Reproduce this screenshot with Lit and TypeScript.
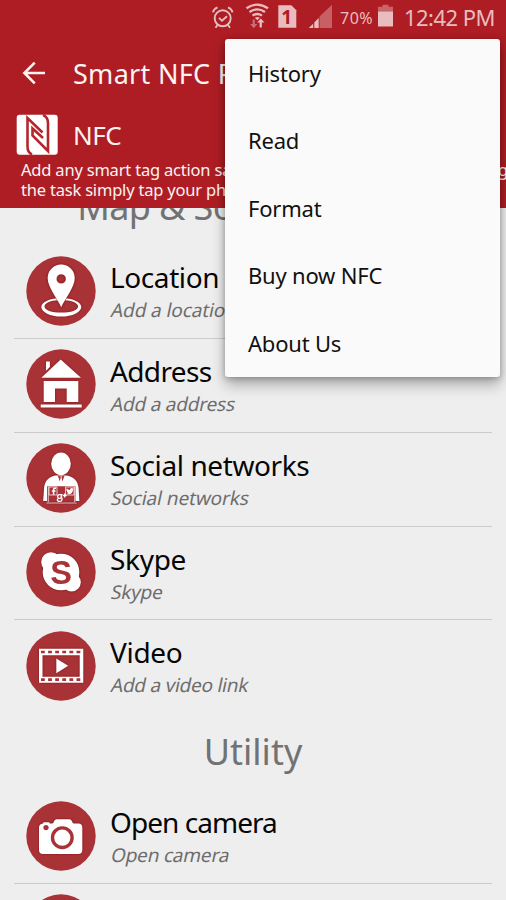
import { LitElement, html, svg, css, SVGTemplateResult } from "lit";
import { customElement, property } from "lit/decorators.js";

const red = "#a93236";

const icons: Record<string, SVGTemplateResult> = {
  location: svg`
    <path fill-rule="evenodd" d="M35.3 42c11 0 20 4 20 9s-9 9.6-20 9.6-20-4.600-20-9.600 9-9 20-9zM35.300 44c-9.500 0-16.800 2.800-16.800 6.400s7.300 6.200 16.800 6.200 16.800-2.600 16.800-6.200-7.300-6.400-16.800-6.400z"/>
    <path fill-rule="evenodd" stroke="${red}" stroke-width="1" paint-order="stroke" d="M35.200 51.300C32 43.500 21.700 31.500 21.700 22.100a13.500 13.500 0 0 1 27 0c0 9.400-10.300 21.400-13.500 29.200zM35.200 18.200a4.700 4.700 0 1 0 0 9.400a4.700 4.700 0 1 0 0-9.400z"/>`,
  address: svg`
    <path d="M20 12.500h3.900v5.500L20 21.700zM15.300 28.800L34.700 10.500L55 28.800z"/>
    <path d="M17.700 32h34.600v21H40.700V39.500H29V53H17.700zM14.700 55.400h41v3h-41z"/>`,
  social: svg`
    <ellipse cx="35" cy="20.800" rx="9.800" ry="11.400"/>
    <path d="M29.500 32.400h11c7 1 11.300 5.500 12 12l.9 13.600H17.200l.9-13.600c.6-6.500 4.900-11 11.400-12z"/>
    <path fill="${red}" d="M31.800 32.400l2 6.200 1.200-5.200zM38.500 32.400l-2 6.200-1.200-5.200zM21 43.200h28.500v15.500H21z"/>
    <path fill="none" stroke="#fff" stroke-width=".7" d="M23 44h8v8h-8zM39.500 44h8.500v8h-8.500zM22.300 43.500v15.500M48.700 43.500v15.500M20.500 60h30"/>
    <path fill="none" stroke="#fff" stroke-width="1.600" d="M30 45.300h-1.200q-1.200 0-1.200 1.300v5.200M25.800 48h3.800"/>
    <path d="M40.700 45.300c1 1.200 2 1.600 3.300 1.600 0-2 2-2.200 2.800-1.300l1-.3-.8 1.500c.1 3.500-3.300 5.500-6.500 4 1 0 1.500-.2 2-.7-1.200-.5-1.400-1-1.500-1.600-.7-.8-.7-2-.3-3.200z"/>
    <path fill="none" stroke="#fff" stroke-width="1.300" d="M36.500 51.600h-3a1.900 1.900 0 1 0 1.800 1.200l-.3 1.300c1.600 1 1.600 4.200-1.300 4.300-3.200 0-3.200-3.200.6-3.300M38.700 50.500v4M36.800 52.500h3.800"/>`,
  skype: svg`
    <circle cx="35" cy="35" r="18.300"/><circle cx="25" cy="25" r="9.800"/><circle cx="45.600" cy="45.300" r="9.200"/>
    <text x="35" y="46.700" text-anchor="middle" font-family="Liberation Sans, sans-serif" font-weight="700" font-size="32.500" fill="${red}">S</text>`,
  video: svg`
    <path fill-rule="evenodd" d="M13 17.800h44.300v34H13zM16.500 24.300v21.500h37.200v-21.500z"/>
    <path d="M30.300 27.500L42.200 34.800L30.300 42.300z"/>
    <path stroke="${red}" stroke-width="2.700" stroke-dasharray="3.800 3.300" d="M15 21h41M15 48.700h41"/>`,
  camera: svg`
    <path d="M17 22.500q0-1.300 1.300-1.300h4q1.200 0 1.500 1.300h2.200q1 0 1.500-1l.8-1.700q.7-1.500 2.300-1.500h12.800q1.600 0 2.300 1.500l.8 1.700q.5 1 1.600 1h4.200q4 0 4 4v22.500q0 4-4 4H17q-4 0-4-4V26.500q0-3.500 4-4z"/>
    <circle cx="36.300" cy="36.700" r="9.800" fill="none" stroke="${red}" stroke-width="3.400"/>
    <circle cx="20" cy="26.600" r="2.600" fill="${red}"/>`,
  blank: svg``,
};

@customElement("status-bar")
class StatusBar extends LitElement {
  static styles = css`
    :host { display: flex; height: 36px; padding-right: 10px; justify-content: flex-end; color: #e9bdbf; font-family: "Noto Sans", sans-serif; }
    svg { display: block; margin-top: 2px; flex: none; }
    .pct { font-size: 16px; line-height: 36px; letter-spacing: 0.5px; padding-left: 6px; width: 37px; }
    .time { font-size: 22px; line-height: 35px; width: 102px; letter-spacing: -0.55px; padding-left: 10px; box-sizing: border-box; white-space: nowrap; }
    .sim { font: 700 19px "Noto Sans", sans-serif; }
  `;
  render() {
    return html`
      <svg width="126" height="30" viewBox="208 2 126 30" fill="currentColor">
        <g fill="none" stroke="currentColor" stroke-width="1.900">
          <circle cx="222.700" cy="18.300" r="8"/>
          <path d="M219 17.800l3 3 5-4.600M217.500 25l-2 2.700M228 25l2 2.700M213 12.300q.5-3.300 4.500-5M232.500 12.300q-.5-3.300-4.500-5"/>
          <path stroke-width="2.300" d="M246.500 8.300q10.700-7.500 21.500 0M249.500 12q7.700-5.300 15.500 0M252.500 15.600q4.700-3.200 9.500 0"/>
        </g>
        <path d="M254.800 17.700q2.500-1.500 5 0l-2.500 2.500z"/>
        <path d="M260.800 18.500l3.700 4h-2.600v5h-2.300v-5h-2.500z"/>
        <path opacity=".5" d="M252.700 19.500h2.200v4.500h2.500l-3.600 4.300-3.700-4.300h2.600z"/>
        <path d="M278.300 5.300h13l5 5v17.500h-18z"/>
        <text class="sim" x="281.300" y="23.800" fill="#ae1d23">1</text>
        <path opacity=".42" d="M319.500 16.500L332 4.700V28H319.500z"/>
        <path d="M308.700 28l4.500-4.300V28zM314.300 22.600l4.400-4.600V28h-4.400z"/>
      </svg>
      <span class="pct">70%</span>
      <svg width="17" height="30" viewBox="377 2 17 30">
        <path fill="#c9656a" d="M382.500 4.700h6v2h4.500v5h-15v-5h4.500z"/>
        <path fill="currentColor" d="M378 11.500h15V26.500h-15z"/>
      </svg>
      <span class="time">12:42 PM</span>`;
  }
}

@customElement("action-row")
class ActionRow extends LitElement {
  @property() icon = "";
  @property() label = "";
  @property() detail = "";
  @property({ type: Boolean }) last = false;
  static styles = css`
    :host { display: block; height: 93.8px; margin: 0 14px; box-sizing: border-box; border-bottom: 1px solid #cbcbcb; font-family: "Noto Sans", sans-serif; }
    :host([last]) { border-color: transparent; }
    .row { display: flex; padding: 10.500px 0 0 11.500px; gap: 14.500px; }
    .row svg { flex: none; display: block; }
    .glyph { fill: #fff; filter: drop-shadow(0 0 1.2px rgba(80, 0, 0, 0.55)); }
    .label { font-size: 28px; line-height: 36px; color: #060606; letter-spacing: var(--track, -0.4px); margin-top: 3.500px; white-space: nowrap; }
    .detail { font-size: 19px; line-height: 26px; color: #6d6d6d; margin: 2px 0 0 -0.500px; white-space: nowrap; transform: skewX(-12deg); transform-origin: 0 20px; letter-spacing: var(--detail-track, -0.1px); }
  `;
  render() {
    return html`<div class="row">
      <svg width="70" height="70" viewBox="0 0 70 70">
        <circle cx="35" cy="35" r="34.700" fill="${red}"/>
        <g class="glyph">${icons[this.icon]}</g>
      </svg>
      <div><div class="label">${this.label}</div><div class="detail">${this.detail}</div></div>
    </div>`;
  }
}

@customElement("app-root")
class AppRoot extends LitElement {
  static styles = css`
    :host { display: flex; flex-direction: column; position: relative; height: 900px; overflow: hidden; background: #eee; font-family: "Noto Sans", sans-serif; }
    .head { background: #ae1d23; color: #fbf3f3; height: 208px; flex: none; overflow: hidden; }
    .bar { display: flex; align-items: center; height: 74px; padding-left: 20px; gap: 25px; }
    .title { font-size: 27px; letter-spacing: 0.3px; white-space: nowrap; }
    .brand { display: flex; align-items: center; height: 50px; padding-left: 16px; gap: 15px; }
    .brand-name { font-size: 26px; letter-spacing: -0.5px; }
    .intro { font-size: 16.500px; line-height: 19.500px; letter-spacing: -0.2px; padding-left: 21px; white-space: nowrap; }
    .line { display: flex; justify-content: space-between; }
    .edge { margin-right: -2px; }
    .list { flex: 1; min-height: 0; overflow: hidden; }
    .section { height: 76px; line-height: 76px; font-size: 36px; color: #727272; text-align: center; white-space: nowrap; }
    .first { margin-top: -38.900px; padding-left: 3px; letter-spacing: -0.6px; }
    .address { --track: -0.65px; --detail-track: -0.2px; }
    .camera { --track: -0.95px; --detail-track: -0.2px; }
    .plain { --track: -0.3px; --detail-track: -0.25px; }
    .menu { position: absolute; left: 225px; top: 39px; width: 275px; height: 338px; box-sizing: border-box; background: #fafafa; border-radius: 3px; box-shadow: 0 8px 14px rgba(0, 0, 0, 0.28), 0 1px 6px rgba(0, 0, 0, 0.28); color: #111; }
    .item { height: 67.400px; line-height: 69px; padding-left: 23px; font-size: 22px; letter-spacing: -0.2px; white-space: nowrap; }
  `;
  render() {
    return html`
      <div class="head">
        <status-bar></status-bar>
        <div class="bar">
          <svg width="28" height="26" viewBox="0 0 28 26" fill="none" stroke="currentColor" stroke-width="2.600"><path d="M25 13H4.500M14.700 2.700L4.400 13L14.700 23.300"/></svg>
          <span class="title">Smart NFC Programmer</span>
        </div>
        <div class="brand">
          <svg width="42" height="42" viewBox="0 0 42 42">
            <rect x=".7" y=".7" width="41" height="40" rx="3" fill="#fff"/>
            <g fill="none" stroke="#b5262c" stroke-width="2.600">
              <path d="M16 40.500q-4.500-2-4.500-8V4L26.500 18.500"/>
              <path d="M27 1q5 2 5 8v28L16.500 21.500V14.500L27 24"/>
            </g>
          </svg>
          <span class="brand-name">NFC</span>
        </div>
        <div class="intro">
          <div class="line"><span>Add any smart tag action save</span><span class="edge">using</span></div>
          <div class="line">the task simply tap your phone</div>
        </div>
      </div>
      <div class="list">
        <div class="section first">Map &amp; Social network</div>
        <action-row icon="location" label="Location" detail="Add a location"></action-row>
        <action-row class="address" icon="address" label="Address" detail="Add a address"></action-row>
        <action-row icon="social" label="Social networks" detail="Social networks"></action-row>
        <action-row class="plain" icon="skype" label="Skype" detail="Skype"></action-row>
        <action-row class="plain" icon="video" label="Video" detail="Add a video link" last></action-row>
        <div class="section">Utility</div>
        <action-row class="camera" icon="camera" label="Open camera" detail="Open camera"></action-row>
        <action-row icon="blank" last></action-row>
      </div>
      <div class="menu">
        ${["History", "Read", "Format", "Buy now NFC", "About Us"].map((t) => html`<div class="item">${t}</div>`)}
      </div>`;
  }
}
